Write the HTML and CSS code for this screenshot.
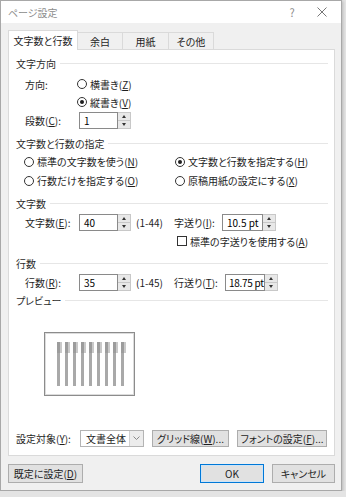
FILE: index.html
```html
<!DOCTYPE html>
<html lang="ja">
<head>
    <meta charset="UTF-8">
    <meta name="viewport" content="width=device-width, initial-scale=1.0">
    <title>ページ設定</title>
    <link rel="stylesheet" href="styles.css">
</head>
<body>
    <div class="dialog">
        <div class="titlebar">
            <span class="title">ページ設定</span>
            <span class="help">?</span>
            <span class="close">
                <svg width="10" height="10" viewBox="0 0 10 10"><path d="M0.5 0.5 L9.5 9.5 M9.5 0.5 L0.5 9.5" stroke="#777" stroke-width="1"/></svg>
            </span>
        </div>

        <div class="tabs">
            <div class="tab active t1">文字数と行数</div>
            <div class="tab t2">余白</div>
            <div class="tab t3">用紙</div>
            <div class="tab t4">その他</div>
        </div>

        <div class="panel">
            <!-- 文字方向 -->
            <div class="sec-head">文字方向</div>
            <div class="row mt5">
                <span class="lbl narrow">方向:</span>
                <span class="radio"></span><span>横書き(<u>Z</u>)</span>
            </div>
            <div class="row">
                <span class="lbl narrow"></span>
                <span class="radio on"></span><span>縦書き(<u>V</u>)</span>
            </div>
            <div class="row">
                <span class="lbl">段数(<u>C</u>):</span>
                <span class="field w39">1</span><span class="spin"><i class="up"></i><i class="down"></i></span>
            </div>

            <!-- 文字数と行数の指定 -->
            <div class="sec-head mt7">文字数と行数の指定</div>
            <div class="grid mt2">
                <div class="opt"><span class="radio"></span><span>標準の文字数を使う(<u>N</u>)</span></div>
                <div class="opt"><span class="radio on"></span><span>文字数と行数を指定する(<u>H</u>)</span></div>
                <div class="opt"><span class="radio"></span><span>行数だけを指定する(<u>O</u>)</span></div>
                <div class="opt"><span class="radio"></span><span>原稿用紙の設定にする(<u>X</u>)</span></div>
            </div>

            <!-- 文字数 -->
            <div class="sec-head mt6">文字数</div>
            <div class="row mt3">
                <span class="lbl">文字数(<u>E</u>):</span>
                <span class="field w39">40</span><span class="spin"><i class="up"></i><i class="down"></i></span>
                <span class="range">(1-44)</span>
                <span class="lbl2">字送り(<u>I</u>):</span>
                <span class="field w41">10.5 pt</span><span class="spin"><i class="up"></i><i class="down"></i></span>
            </div>
            <div class="row check-row mt1">
                <span class="check"></span><span>標準の字送りを使用する(<u>A</u>)</span>
            </div>

            <!-- 行数 -->
            <div class="sec-head mt6">行数</div>
            <div class="row mt3">
                <span class="lbl">行数(<u>R</u>):</span>
                <span class="field w39">35</span><span class="spin"><i class="up"></i><i class="down"></i></span>
                <span class="range">(1-45)</span>
                <span class="lbl2 wide">行送り(<u>T</u>):</span>
                <span class="field w40 tight">18.75 pt</span><span class="spin"><i class="up"></i><i class="down"></i></span>
            </div>

            <!-- プレビュー -->
            <div class="sec-head mt2">プレビュー</div>
            <div class="preview">
                <div class="col"><b></b><s></s></div>
                <div class="col"><b></b><s></s></div>
                <div class="col"><b></b><s></s></div>
                <div class="col"><b></b><s></s></div>
                <div class="col"><b></b><s></s></div>
                <div class="col"><b></b><s></s></div>
                <div class="col"><b></b><s></s></div>
                <div class="col"><b></b><s></s></div>
                <div class="col"><b></b><s></s></div>
            </div>

            <div class="apply-row">
                <span class="apply-lbl">設定対象(<u>Y</u>):</span>
                <span class="select">
                    <span class="select-text">文書全体</span>
                    <span class="select-arrow">
                        <svg width="7" height="4" viewBox="0 0 7 4"><path d="M0.5 0.5 L3.5 3.5 L6.5 0.5" fill="none" stroke="#888" stroke-width="1"/></svg>
                    </span>
                </span>
                <button class="btn grid-btn">グリッド線(<u>W</u>)...</button>
                <button class="btn font-btn">フォントの設定(<u>F</u>)...</button>
            </div>
        </div>

        <div class="footer">
            <button class="btn default-btn">既定に設定(<u>D</u>)</button>
            <button class="btn ok-btn">OK</button>
            <button class="btn cancel-btn">キャンセル</button>
        </div>
    </div>
</body>
</html>
```

FILE: styles.css
```css
* {
    box-sizing: border-box;
}
body {
    margin: 0;
    background: #e4e4e4;
    font-family: "Noto Sans CJK JP", "Noto Sans", sans-serif;
    font-size: 10px;
    color: #1e1e1e;
    font-feature-settings: "palt";
}
u {
    text-decoration: underline;
    text-underline-offset: 1px;
}
.dialog {
    width: 342px;
    height: 491px;
    background: #f0f0f0;
    border: 1px solid #a8a8a8;
    box-shadow: 1px 1px 3px rgba(0, 0, 0, 0.2);
    display: flex;
    flex-direction: column;
}
.titlebar {
    height: 22px;
    background: #fff;
    display: flex;
    align-items: center;
    padding: 0 4px 0 7px;
    color: #8c8c8c;
    flex-shrink: 0;
}
.title {
    flex: 1;
}
.help, .close {
    width: 30px;
    display: flex;
    justify-content: center;
    align-items: center;
    font-size: 11px;
}
.tabs {
    display: flex;
    align-items: flex-end;
    height: 26px;
    padding-left: 7px;
    flex-shrink: 0;
}
.tab {
    height: 17px;
    border: 1px solid #dadada;
    border-bottom: none;
    margin-right: -1px;
    display: flex;
    align-items: center;
    justify-content: center;
    background: #f0f0f0;
    color: #1e1e1e;
}
.tab.active {
    background: #fff;
    position: relative;
    z-index: 1;
    margin-bottom: -1px;
    height: 20px;
}
.t1 { width: 70px; }
.t2 { width: 46px; }
.t3 { width: 47px; }
.t4 { width: 46px; }
.panel {
    margin: 0 6px 0 7px;
    height: 407px;
    background: #fff;
    border: 1px solid #dadada;
    padding: 6px 6px 0 7px;
    display: flex;
    flex-direction: column;
    flex-shrink: 0;
}
.sec-head {
    display: flex;
    align-items: center;
    height: 14px;
    color: #2b2b2b;
}
.sec-head::after {
    content: "";
    flex: 1;
    border-top: 1px solid #e6e6e6;
    margin-left: 4px;
}
.mt1 { margin-top: 1px; }
.mt2 { margin-top: 2px; }
.mt3 { margin-top: 3px; }
.mt5 { margin-top: 5px; }
.mt6 { margin-top: 6px; }
.mt7 { margin-top: 7px; }
.row {
    display: flex;
    align-items: center;
    height: 18px;
    padding-left: 9px;
}
.lbl {
    width: 54px;
}
.lbl.narrow {
    width: 52px;
}
.radio {
    width: 10px;
    height: 10px;
    border: 1px solid #333;
    border-radius: 50%;
    margin-right: 3px;
    display: flex;
    align-items: center;
    justify-content: center;
    flex-shrink: 0;
}
.radio.on::after {
    content: "";
    width: 4px;
    height: 4px;
    border-radius: 50%;
    background: #1e1e1e;
}
.check {
    width: 10px;
    height: 10px;
    border: 1px solid #333;
    margin-right: 3px;
}
.field {
    height: 17px;
    border: 1px solid #8a8a8a;
    background: #fff;
    padding-left: 4px;
    display: flex;
    align-items: center;
    white-space: nowrap;
    overflow: hidden;
    color: #000;
}
.field.tight {
    padding-left: 3px;
    letter-spacing: -0.3px;
}
.w39 { width: 39px; }
.w40 { width: 40px; }
.w41 { width: 41px; }
.spin {
    width: 13px;
    height: 17px;
    display: flex;
    flex-direction: column;
    border: 1px solid #c8c8c8;
    border-left: none;
    background: #e8e8e8;
}
.spin i {
    flex: 1;
    display: flex;
    align-items: center;
    justify-content: center;
}
.spin i + i {
    border-top: 1px solid #c8c8c8;
}
.spin .up::after {
    content: "";
    border-left: 2px solid transparent;
    border-right: 2px solid transparent;
    border-bottom: 3px solid #333;
}
.spin .down::after {
    content: "";
    border-left: 2px solid transparent;
    border-right: 2px solid transparent;
    border-top: 3px solid #333;
}
.range {
    margin-left: 5px;
    width: 38px;
}
.lbl2 {
    width: 48px;
}
.lbl2.wide {
    width: 51px;
}
.check-row {
    padding-left: 161px;
}
.grid {
    display: grid;
    grid-template-columns: 151px 1fr;
    padding-left: 8px;
}
.opt {
    height: 19px;
    display: flex;
    align-items: center;
}
.preview {
    margin: 25px 0 0 28px;
    width: 91px;
    height: 64px;
    border: 1px solid #8c8c8c;
    box-shadow: inset 0 0 0 1px #dcdcdc;
    display: flex;
    gap: 3px;
    padding: 9px 0 0 12px;
}
.col {
    width: 5px;
    display: flex;
    flex-direction: column;
}
.col b {
    display: block;
    width: 5px;
    height: 11px;
    background: linear-gradient(to right, #9c9c9c 0 3px, #c9c9c9 3px);
}
.col s {
    display: block;
    width: 3px;
    height: 33px;
    background: #a9a9a9;
}
.apply-row {
    margin-top: 33px;
    display: flex;
    align-items: center;
    height: 18px;
}
.apply-lbl {
    width: 64px;
}
.select {
    width: 64px;
    height: 17px;
    border: 1px solid #b4b4b4;
    display: flex;
    background: #fff;
}
.select-text {
    flex: 1;
    padding-left: 5px;
    display: flex;
    align-items: center;
}
.select-arrow {
    width: 14px;
    background: #ececec;
    border-left: 1px solid #d0d0d0;
    display: flex;
    align-items: center;
    justify-content: center;
}
.btn {
    font: inherit;
    font-feature-settings: "palt";
    color: #1e1e1e;
    background: #e1e1e1;
    border: 1px solid #adadad;
    height: 17px;
    padding: 0;
    display: flex;
    align-items: center;
    justify-content: center;
}
.grid-btn {
    margin-left: 8px;
    width: 77px;
}
.font-btn {
    margin-left: 8px;
    width: 90px;
}
.footer {
    display: flex;
    align-items: center;
    padding: 8px 6px 0 7px;
}
.footer .btn {
    height: 19px;
}
.default-btn {
    width: 75px;
}
.ok-btn {
    margin-left: auto;
    width: 64px;
    border: 1px solid #0078d7;
    box-shadow: inset 0 0 0 1px #cde4f7;
}
.cancel-btn {
    margin-left: 8px;
    width: 63px;
}
```
